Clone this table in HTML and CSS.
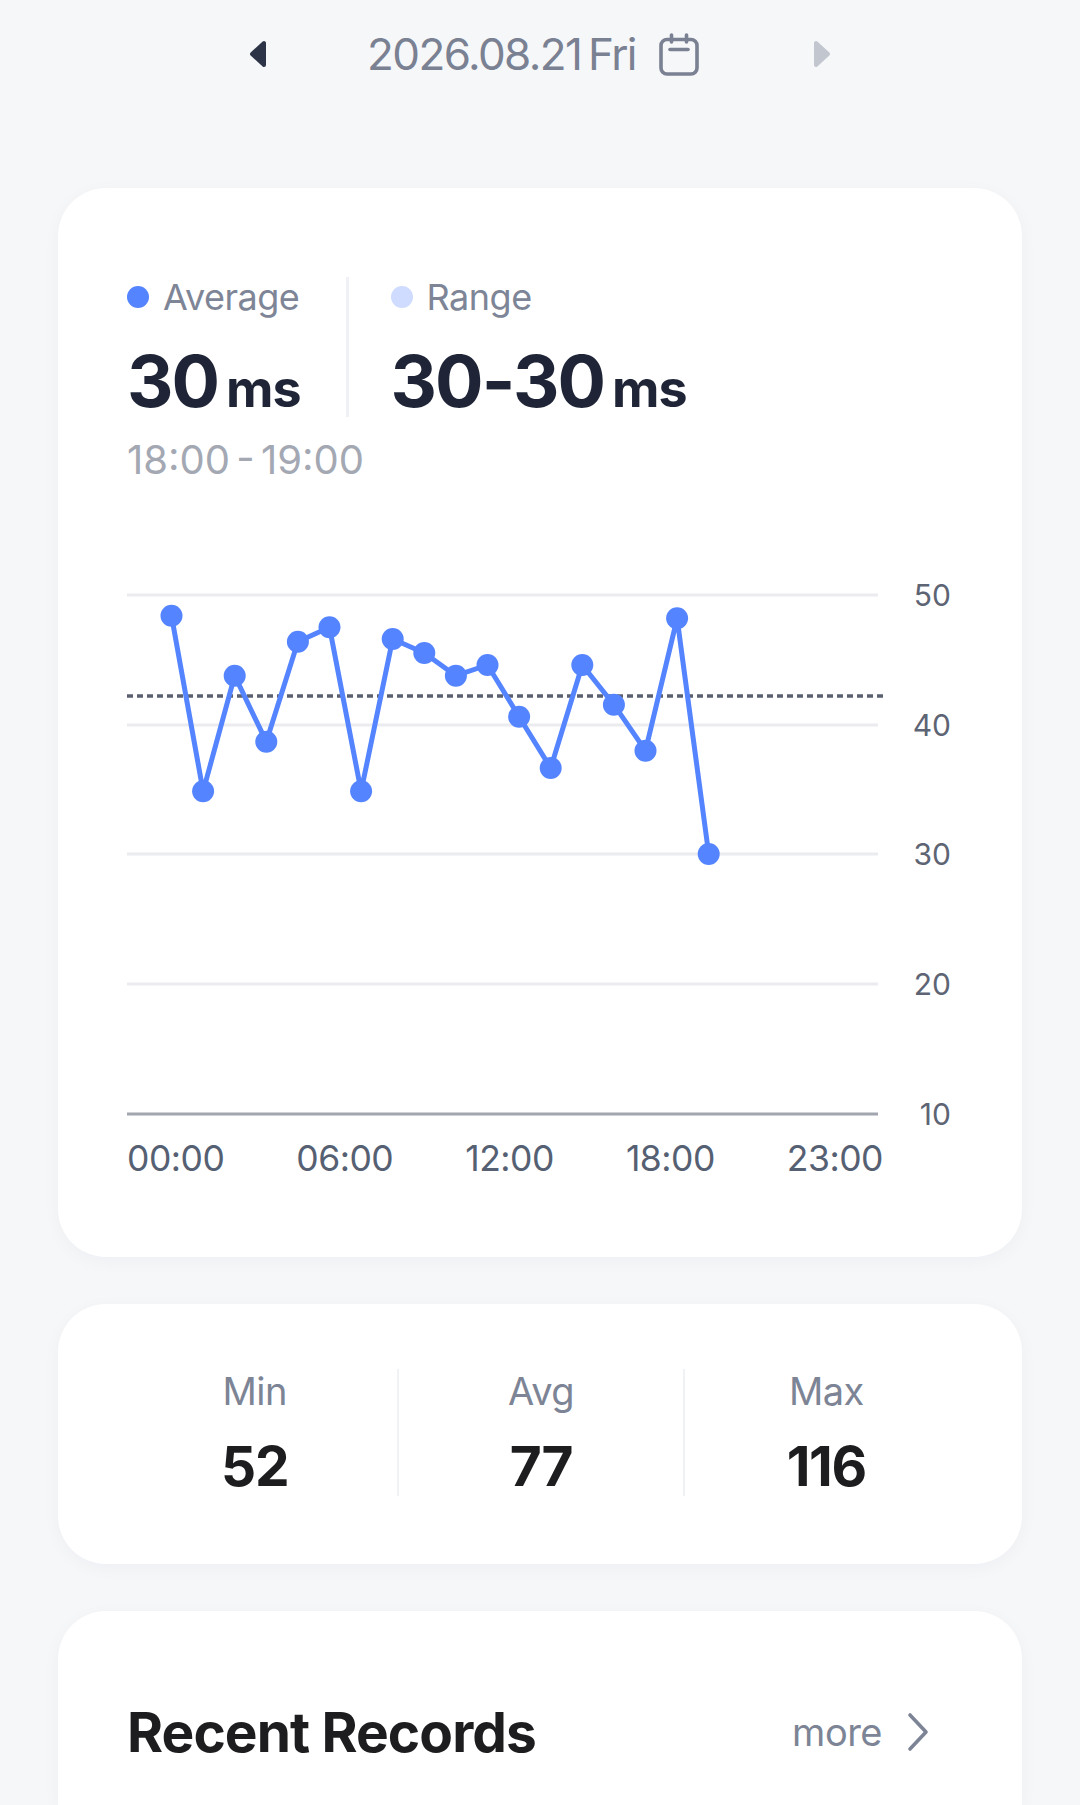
FILE: index.html
```html
<!DOCTYPE html>
<html lang="en">
<head>
<meta charset="utf-8">
<title>Latency</title>
<link rel="stylesheet" href="styles.css">
</head>
<body>
<header class="date-bar">
  <svg class="nav-arrow prev" width="18" height="28" viewBox="0 0 18 28"><path d="M15 3 L15 25 L3 14 Z" /></svg>
  <span class="date-text">2026.08.21 Fri</span>
  <svg class="cal-icon" width="40" height="43" viewBox="0 0 40 43"><rect x="2" y="6.5" width="36" height="34.5" rx="6" /><line x1="12.5" y1="2" x2="12.5" y2="9" /><line x1="27.5" y1="2" x2="27.5" y2="9" /><line x1="11" y1="16.5" x2="29" y2="16.5" /></svg>
  <svg class="nav-arrow next" width="18" height="28" viewBox="0 0 18 28"><path d="M3 3 L3 25 L15 14 Z" /></svg>
</header>

<main class="content">
  <section class="card chart-card">
    <div class="summary">
      <div class="summary-col">
        <div class="legend"><span class="dot dot-avg"></span>Average</div>
        <div class="big-value"><span class="num">30</span><span class="unit">ms</span></div>
      </div>
      <div class="summary-col range-col">
        <div class="legend"><span class="dot dot-range"></span>Range</div>
        <div class="big-value"><span class="num">30-30</span><span class="unit">ms</span></div>
      </div>
    </div>
    <div class="time-range">18:00 - 19:00</div>

    <svg class="chart" width="964" height="580" viewBox="0 0 964 580">
      <g class="grid">
        <line x1="69" y1="36" x2="820" y2="36" />
        <line x1="69" y1="166" x2="820" y2="166" />
        <line x1="69" y1="295" x2="820" y2="295" />
        <line x1="69" y1="425" x2="820" y2="425" />
      </g>
      <line class="axis" x1="69" y1="555" x2="820" y2="555" />
      <line class="avg-line" x1="69" y1="137" x2="826" y2="137" />
      <g class="y-labels">
        <text x="893" y="47">50</text>
        <text x="893" y="177">40</text>
        <text x="893" y="306">30</text>
        <text x="893" y="436">20</text>
        <text x="893" y="566">10</text>
      </g>
      <polyline class="series" points="113.5,56.7 145.1,232.3 176.7,116.7 208.3,182.7 239.9,82.7 271.5,68.3 303.1,232.3 334.7,80 366.3,94 397.9,116.7 429.5,106 461.1,157.7 492.7,209 524.3,106 555.9,145.7 587.5,191.7 619.1,59.3 650.7,295" />
      <g class="points">
        <circle cx="113.5" cy="56.7" r="11" />
        <circle cx="145.1" cy="232.3" r="11" />
        <circle cx="176.7" cy="116.7" r="11" />
        <circle cx="208.3" cy="182.7" r="11" />
        <circle cx="239.9" cy="82.7" r="11" />
        <circle cx="271.5" cy="68.3" r="11" />
        <circle cx="303.1" cy="232.3" r="11" />
        <circle cx="334.7" cy="80" r="11" />
        <circle cx="366.3" cy="94" r="11" />
        <circle cx="397.9" cy="116.7" r="11" />
        <circle cx="429.5" cy="106" r="11" />
        <circle cx="461.1" cy="157.7" r="11" />
        <circle cx="492.7" cy="209" r="11" />
        <circle cx="524.3" cy="106" r="11" />
        <circle cx="555.9" cy="145.7" r="11" />
        <circle cx="587.5" cy="191.7" r="11" />
        <circle cx="619.1" cy="59.3" r="11" />
        <circle cx="650.7" cy="295" r="11" />
      </g>
    </svg>
    <div class="x-labels">
      <span>00:00</span><span>06:00</span><span>12:00</span><span>18:00</span><span>23:00</span>
    </div>
  </section>

  <section class="card stats-card">
    <div class="stat">
      <div class="stat-label">Min</div>
      <div class="stat-value">52</div>
    </div>
    <div class="stat">
      <div class="stat-label">Avg</div>
      <div class="stat-value">77</div>
    </div>
    <div class="stat">
      <div class="stat-label">Max</div>
      <div class="stat-value">116</div>
    </div>
  </section>

  <section class="card records-card">
    <div class="records-head">
      <h2 class="records-title">Recent Records</h2>
      <a class="more-link">more
        <svg class="chev" width="24" height="40" viewBox="0 0 24 40"><path d="M4 3 L20 20 L4 37" /></svg>
      </a>
    </div>
  </section>
</main>
</body>
</html>
```

FILE: styles.css
```css
* { box-sizing: border-box; }

html, body {
  margin: 0;
  padding: 0;
  background: #f6f7f9;
  font-family: Inter, "Noto Sans", "Liberation Sans", sans-serif;
  color: #1f2537;
}

html {
  height: 1805px;
  overflow: hidden;
}

body {
  height: 1805px;
  overflow: hidden;
}

.date-bar {
  height: 108px;
  display: flex;
  align-items: center;
  justify-content: center;
}

.nav-arrow path {
  stroke-linejoin: round;
  stroke-width: 4;
}
.nav-arrow.prev { margin-right: 100px; }
.nav-arrow.prev path { fill: #2e3447; stroke: #2e3447; }
.nav-arrow.next path { fill: #c2c6ce; stroke: #c2c6ce; }

.date-text {
  font-size: 44px;
  line-height: 52px;
  color: #7a8192;
  letter-spacing: -1.6px;
  word-spacing: -4px;
}

.cal-icon {
  margin-left: 23px;
  margin-right: 114px;
  fill: none;
  stroke: #7a8192;
  stroke-width: 3.6;
  stroke-linecap: round;
}

.content {
  padding: 80px 58px 0;
  display: flex;
  flex-direction: column;
  gap: 47px;
}

.card {
  background: #ffffff;
  border-radius: 48px;
  box-shadow: 0 4px 18px rgba(30, 40, 60, 0.035);
}

.chart-card {
  padding: 89px 0 78px;
}

.summary {
  display: flex;
  padding-left: 69px;
}

.summary-col {
  display: flex;
  flex-direction: column;
  gap: 28px;
  padding-right: 45px;
}

.range-col {
  border-left: 3px solid #f0f1f4;
  padding-left: 42px;
}

.legend {
  display: flex;
  align-items: center;
  font-size: 36px;
  line-height: 40px;
  color: #7d8596;
  letter-spacing: -0.5px;
}

.dot {
  width: 22px;
  height: 22px;
  border-radius: 50%;
  margin-right: 14px;
}
.dot-avg { background: #5484ff; }
.dot-range { background: #cfdcff; }

.big-value {
  display: flex;
  align-items: baseline;
  height: 72px;
}

.big-value .num {
  font-size: 72px;
  line-height: 72px;
  font-weight: 700;
  letter-spacing: -2px;
  color: #1f2537;
}

.big-value .unit {
  font-size: 52px;
  font-weight: 700;
  margin-left: 8px;
  letter-spacing: -1px;
  color: #1f2537;
}

.time-range {
  padding-left: 69px;
  margin-top: 20px;
  font-size: 40px;
  line-height: 46px;
  color: #a3a8b3;
  letter-spacing: 0;
  word-spacing: -5px;
}

.chart {
  display: block;
  margin-top: 76px;
}

.grid line {
  stroke: #ebecef;
  stroke-width: 3;
}

.axis {
  stroke: #a1a6af;
  stroke-width: 3;
}

.avg-line {
  stroke: #5b6070;
  stroke-width: 3.5;
  stroke-dasharray: 6 4;
}

.y-labels text {
  font-family: Inter, "Noto Sans", sans-serif;
  font-size: 30px;
  fill: #5d6474;
  text-anchor: end;
}

.series {
  fill: none;
  stroke: #5484ff;
  stroke-width: 5;
  stroke-linejoin: round;
}

.points circle {
  fill: #5484ff;
}

.x-labels {
  display: flex;
  justify-content: space-between;
  margin-left: 69px;
  width: 756px;
  font-size: 35.5px;
  line-height: 40px;
  color: #566073;
  letter-spacing: -0.5px;
}

.stats-card {
  display: grid;
  grid-template-columns: repeat(3, 1fr);
  padding: 65px 54px 68px;
}

.stat {
  display: flex;
  flex-direction: column;
  align-items: center;
  gap: 23px;
}

.stat + .stat {
  border-left: 2px solid #f1f2f4;
}

.stat-label {
  font-size: 38px;
  line-height: 44px;
  color: #7c8495;
  letter-spacing: -0.6px;
}

.stat-value {
  font-size: 55px;
  line-height: 60px;
  font-weight: 700;
  color: #1d1d1f;
  letter-spacing: -1.3px;
}

.records-card {
  height: 194px;
  border-radius: 48px 48px 0 0;
  padding: 91px 92px 0 69px;
}

.records-head {
  display: flex;
  align-items: center;
  justify-content: space-between;
}

.records-title {
  margin: 0;
  font-size: 55px;
  line-height: 60px;
  font-weight: 700;
  color: #1d1d1f;
  letter-spacing: -0.9px;
}

.more-link {
  display: flex;
  align-items: center;
  gap: 24px;
  font-size: 38px;
  color: #7c8495;
  letter-spacing: -0.5px;
}

.chev path {
  fill: none;
  stroke: #7c8495;
  stroke-width: 3.6;
  stroke-linecap: round;
  stroke-linejoin: round;
}
```
